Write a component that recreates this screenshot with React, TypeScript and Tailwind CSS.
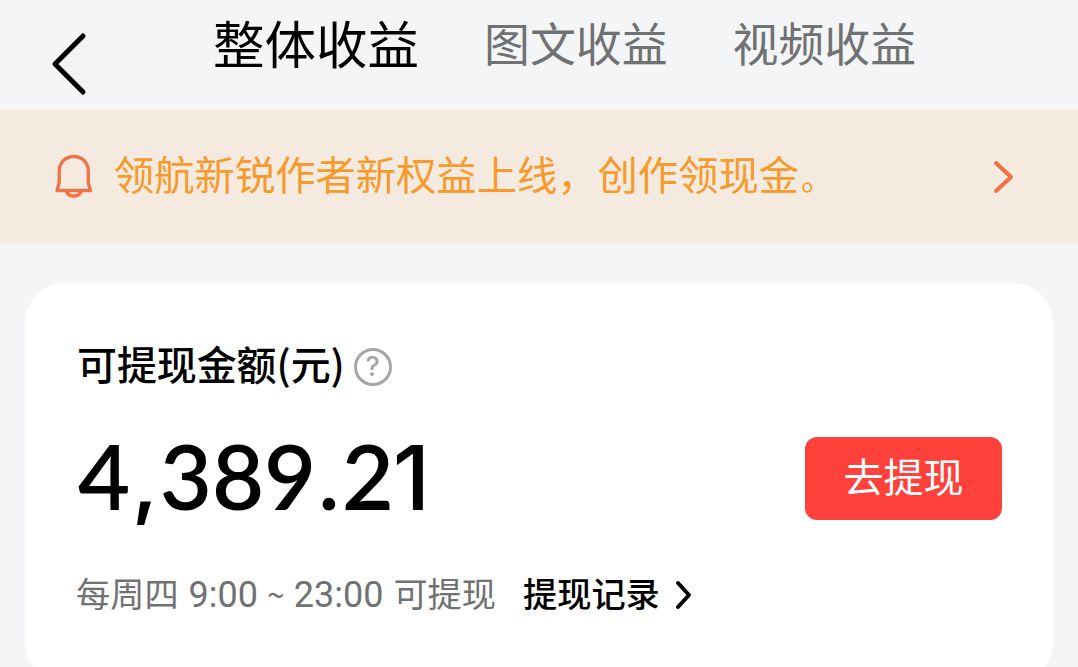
import { useState } from 'react'

const TABS = ['整体收益', '图文收益', '视频收益']

function Chevron({ className, d, width }: { className: string; d: string; width: number }) {
  return (
    <svg className={className} fill="none" stroke="currentColor" strokeWidth={width} strokeLinecap="round" strokeLinejoin="round">
      <path d={d} />
    </svg>
  )
}

export default function App() {
  const [tab, setTab] = useState(0)

  return (
    <div className="h-[667px] w-[1078px] overflow-hidden bg-[#f4f5f7] font-['Noto_Sans_CJK_SC',sans-serif] text-black">
      <header className="flex h-[110px] items-start">
        <button className="ml-[50px] mt-[32px]">
          <Chevron className="block h-[64px] w-[38px]" d="M33 4 L5 32 L33 60" width={5} />
        </button>
        <nav className="ml-[125px] flex items-start gap-[65px] pt-[4px]">
          {TABS.map((t, i) => (
            <button
              key={t}
              onClick={() => setTab(i)}
              className={i === tab ? 'text-[51.5px] leading-[76px]' : 'text-[45.9px] leading-[74px] text-[#707173]'}
            >
              {t}
            </button>
          ))}
        </nav>
      </header>

      <div className="flex h-[134px] items-center bg-[#f5eadf] pl-[53px] pr-[63px]">
        <svg className="h-[46px] w-[42px]" viewBox="0 0 42 46" fill="none" stroke="#ec7549" strokeWidth="3.4" strokeLinecap="round" strokeLinejoin="round">
          <path d="M4 36.5 L6.2 29 V17.5 C6.2 8.5 12.5 2.5 20.8 2.5 S35.3 8.5 35.3 17.5 V29 L37.5 36.5 Z M13.5 37.5 C16 43.5 25.5 43.5 28 37.5" />
        </svg>
        <p className="ml-[19px] flex-1 pb-[5px] text-[40.3px] leading-[60px] text-[#f79a2b]">
          领航新锐作者新权益上线，创作领现金<span className="ml-[2px] text-[32px]">。</span>
        </p>
        <Chevron className="h-[34px] w-[22px] text-[#f2703f]" d="M3 3 L18 17 L3 31" width={4} />
      </div>

      <main className="mx-[25px] mt-[39px] h-[400px] rounded-[40px] bg-white pl-[52px] pr-[51px] pt-[52px]">
        <div className="flex h-[60px] items-center">
          <h1 className="pb-[5px] text-[40px] font-medium leading-[60px] tracking-[-0.1px]">可提现金额(元)</h1>
          <span className="ml-[9px] mt-[3px] flex size-[38px] items-center justify-center rounded-full border-3 border-[#a5a5a5] pt-[2px] font-['Inter',sans-serif] text-[27px] font-medium text-[#a5a5a5]">?</span>
        </div>
        <div className="mt-[41px] flex h-[84px] items-center justify-between">
          <strong className="ml-px font-['Lato',sans-serif] text-[90px] font-semibold leading-[84px]">
            4<span className="mx-[2px] font-['Inter',sans-serif] text-[80px]">,</span>389<span className="mx-[2px]">.</span>2
            <span className="-ml-px font-['Inter',sans-serif] font-medium">1</span>
          </strong>
          <button className="h-[83px] w-[197px] rounded-[12px] bg-[#ff413b] pb-[6px] text-[40px] text-white">去提现</button>
        </div>
        <div className="mt-[45px] flex h-[56px] items-center text-[34.2px]">
          <p className="-ml-px flex items-center text-[#707173]">
            每周四
            <span className="ml-[10px] pt-[4px] font-['Roboto',sans-serif] text-[36px]">9:00</span>
            <span className="mx-[9px] text-[32px]">~</span>
            <span className="mr-[10px] pt-[4px] font-['Roboto',sans-serif] text-[36px]">23:00</span>
            可提现
          </p>
          <button className="ml-[27px] flex items-center font-medium">
            提现记录
            <Chevron className="ml-[14px] mt-[4px] h-[30px] w-[20px]" d="M4 3 L15 15 L4 27" width={4} />
          </button>
        </div>
      </main>
    </div>
  )
}
